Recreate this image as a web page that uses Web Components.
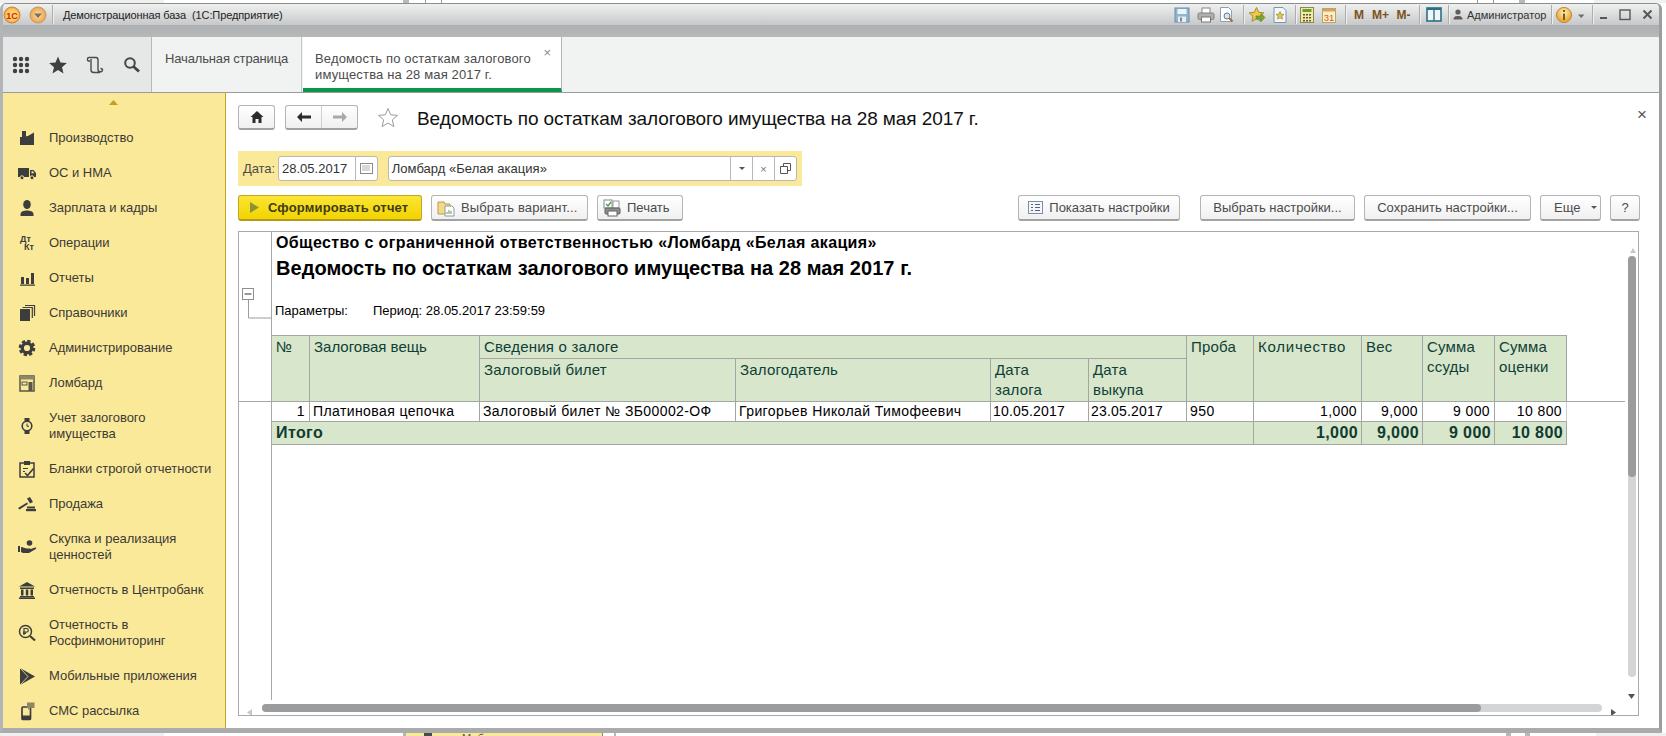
<!DOCTYPE html>
<html lang="ru"><head><meta charset="utf-8"><title>1С</title>
<style>
html,body{margin:0;padding:0;height:736px;width:1666px;overflow:hidden;background:#fff;font-family:"Liberation Sans",Arial,sans-serif}
body{display:flex;flex-direction:column}
</style></head>
<body>
<bg-strip style="height:3px"><i style="width:164px;background:#f0f0f0"></i><i style="width:239px"></i><i style="width:6px;background:#b9b9b9"></i><i style="width:16px"></i><i style="width:1px;background:#999"></i><i style="width:15px"></i><i style="width:1px;background:#999"></i><i style="width:1035px"></i><i style="width:1px;background:#999"></i><i style="width:15px"></i><i style="width:1px;background:#999"></i><i style="width:25px"></i><i style="width:6px;background:#b9b9b9"></i><i style="width:69px"></i><i style="flex:1;background:#f0f0f0"></i></bg-strip>
<app-window>
<title-bar></title-bar>
<tab-bar></tab-bar>
<div style="display:flex;height:635px">
<side-menu></side-menu>
<main-pane></main-pane>
</div>
</app-window>
<under-strip></under-strip>

<script>
const font='"Liberation Sans",Arial,sans-serif';
const svg=(w,h,body,extra='')=>`<svg xmlns="http://www.w3.org/2000/svg" width="${w}" height="${h}" viewBox="0 0 ${w} ${h}" ${extra}>${body}</svg>`;
function def(name,html,init){
  customElements.define(name,class extends HTMLElement{
    constructor(){super();this.attachShadow({mode:'open'});this.shadowRoot.innerHTML=typeof html==='function'?html(this):html;}
    connectedCallback(){if(init&&!this._i){this._i=1;init(this);}}
  });
}
def('bg-strip',`<style>:host{display:flex;flex:none;overflow:hidden}::slotted(i){display:block;flex:none}</style><slot></slot>`);
def('app-window',`<style>:host{display:block;flex:none;height:730px;width:1662px;box-sizing:border-box;background:#f1f3f2;border-left:3px solid #b3b4b5;border-right:3px solid #9c9d9e;border-top:1px solid #8d8d8d;border-radius:6px 6px 0 0;border-bottom:5px solid #a9abac;overflow:hidden}</style><slot></slot>`);

const ic={
 logo:svg(20,20,`<defs><radialGradient id="a"><stop offset="0" stop-color="#ffe27a"/><stop offset=".7" stop-color="#fdc95a"/><stop offset="1" stop-color="#e89a3c"/></radialGradient></defs><circle cx="10" cy="10" r="8" fill="url(#a)" stroke="#c9884a"/><text x="10" y="13.5" font-size="9" font-weight="700" text-anchor="middle" fill="#d3201c" font-family="Liberation Sans">1С</text>`),
 menu:svg(20,20,`<defs><radialGradient id="b"><stop offset="0" stop-color="#fde3a8"/><stop offset="1" stop-color="#eda24b"/></radialGradient></defs><circle cx="10" cy="10" r="8" fill="url(#b)" stroke="#c29a6a"/><path d="M6 8.5h8L10 13z" fill="#77706a"/>`),
 save:svg(16,16,`<rect x="1" y="1" width="14" height="14" fill="#8fb6cf" stroke="#6d8ea6"/><rect x="3.5" y="2" width="9" height="5" fill="#eef5f9"/><rect x="4" y="9.5" width="8" height="5.5" fill="#e6ecef"/><rect x="6" y="10.5" width="2" height="4" fill="#6d8ea6"/>`),
 print:svg(18,16,`<rect x="5" y="1" width="8" height="6" fill="#fff" stroke="#8a8a8a"/><rect x="1" y="6" width="16" height="6.5" rx="1.5" fill="#b0b0b0" stroke="#808080"/><rect x="4.5" y="10" width="9" height="5" fill="#fff" stroke="#777"/>`),
 prev:svg(18,16,`<path d="M2.5.5h8l3 3v11h-11z" fill="#fff" stroke="#8e9fb0"/><circle cx="9" cy="9" r="3" fill="#d7e6f2" stroke="#5b7b96"/><path d="M11 11l3.5 3.5" stroke="#b5622b" stroke-width="2"/>`),
 fav:svg(18,18,`<path d="M8.5 1.500l2.200 4.800 5.100.6-3.800 3.400 1 5-4.500-2.600L4 15.300l1-5L1.200 6.900l5.100-.6z" fill="#f1c84a" stroke="#a58d32"/><path d="M8 10h5V7.500l4 4-4 4V13H8z" fill="#76a832" stroke="#55802a" stroke-width=".6"/>`),
 docstar:svg(14,16,`<path d="M1 .5h9l3 3v12H1z" fill="#f3f7fa" stroke="#7a96ab"/><path d="M7 4.500l1.200 2.600 2.800.3-2.100 1.900.6 2.800L7 10.700l-2.500 1.400.6-2.800L3 7.400l2.800-.3z" fill="#edc24a" stroke="#8d7a3a" stroke-width=".6"/>`),
 calc:svg(14,16,`<rect x=".5" y=".5" width="13" height="15" fill="#f3e9a3" stroke="#8b8b4f"/><rect x="2.500" y="2" width="9" height="3" fill="#6d9a3c"/><path d="M3 7h2v1.500H3zM6 7h2v1.500H6zM9 7h2v1.500H9zM3 10h2v1.500H3zM6 10h2v1.500H6zM9 10h2v1.500H9zM3 13h2v1.500H3zM6 13h2v1.500H6zM9 13h2v1.500H9z" fill="#5a5a3a"/>`),
 cal:svg(14,16,`<rect x=".5" y="1.500" width="13" height="14" fill="#fbf0c4" stroke="#b5a67a"/><rect x="1" y="2" width="12" height="2.500" fill="#d9a05a"/><text x="7" y="14" font-size="9.5" text-anchor="middle" fill="#d9591e" font-family="Liberation Sans">31</text>`),
 panel:svg(16,15,`<rect x="1" y="1" width="14" height="13" fill="#eef6f8" stroke="#2d6f86" stroke-width="1.600"/><path d="M8 1v13" stroke="#2d6f86" stroke-width="1.400"/><path d="M1 2h14" stroke="#2d6f86" stroke-width="2"/>`),
 user:svg(10,11,`<circle cx="5" cy="3" r="2.600" fill="#5c5c5c"/><path d="M.5 10.500c0-3 2-3.600 4.500-3.600s4.500.6 4.500 3.600z" fill="#5c5c5c"/>`),
 info:svg(18,18,`<defs><radialGradient id="c" cx=".5" cy=".35"><stop offset="0" stop-color="#fff3c4"/><stop offset="1" stop-color="#efaa36"/></radialGradient></defs><circle cx="9" cy="9" r="7.600" fill="url(#c)" stroke="#b88a45"/><path d="M8 4h2v2H8zM8 7.500h2v6.500H8z" fill="#7d5a1e"/>`),
 ddown:svg(9,8,`<path d="M1 3.500h6.500L4.200 7z" fill="#6d6d6d"/>`),
 min:svg(10,10,`<rect x="1" y="7" width="7" height="2" fill="#55585b"/>`),
 max:svg(12,12,`<rect x="1" y="1" width="10" height="9.500" fill="none" stroke="#55585b" stroke-width="1.400"/>`),
 close:svg(11,11,`<path d="M1.500 1.500l8 8M9.500 1.500l-8 8" stroke="#55585b" stroke-width="2"/>`),
};
const sep=`<span class="sep"></span>`;
const gp=w=>`<span style="width:${w}px"></span>`;
const box=(w,c,cls='',st='')=>`<span class="${cls}" style="width:${w}px;${st}">${c}</span>`;
def('title-bar',`<style>
:host{display:flex;align-items:center;height:33px;box-sizing:border-box;padding:0 0 12px 0;background:linear-gradient(#eff0f0 0,#c7c8c9 21px,#adb0b2 21px,#b6b8ba 33px);font:11px ${font};color:#222}
span{display:flex;align-items:center;justify-content:center;flex:none}
.sep{width:1px;height:19px;background:#adadad;box-shadow:1px 0 #efefef}
.m{font-weight:700;color:#7d5119;font-size:12px}
.t{margin-left:10px;justify-content:flex-start;white-space:pre;font-size:11px;letter-spacing:-.1px}
.sp{flex:1}
</style>
<span style="width:20px;margin-left:-1px">${ic.logo}</span>${gp(6)}<span style="width:20px">${ic.menu}</span>${gp(4)}${sep}
<span class="t">Демонстрационная база  (1С:Предприятие)</span><span class="sp"></span>
${box(18,ic.save)}${gp(5)}${box(20,ic.print)}${gp(2)}${box(18,ic.prev)}${gp(7)}${sep}
${gp(4)}${box(18,ic.fav)}${gp(7)}${box(14,ic.docstar)}${gp(8)}${sep}
${gp(4)}${box(14,ic.calc)}${gp(8)}${box(14,ic.cal)}${gp(9)}${sep}
${gp(3)}${box(20,'M','m')}${gp(1)}${box(21,'M+','m')}${gp(1)}${box(23,'M-','m')}${gp(4)}${sep}
${gp(5)}${box(17,ic.panel)}${gp(6)}${sep}
${gp(4)}${box(10,ic.user)}${gp(4)}${box(78,'Администратор','','justify-content:flex-start;color:#333')}${gp(6)}${sep}
${gp(3)}${box(18,ic.info)}${gp(3)}${box(10,ic.ddown)}${gp(6)}${sep}
${gp(6)}${box(10,ic.min)}${gp(9)}${box(14,ic.max)}${gp(9)}${box(12,ic.close)}${gp(6)}`);

def('tab-bar',`<style>
:host{display:flex;height:56px;box-sizing:border-box;border-bottom:1px solid #9b9b9b;background:#f1f3f2;font:13px ${font};color:#4b4b4b}
.q{width:148px;background:#e6e7e7;border-right:1px solid #b9b9b9;display:flex;align-items:center;flex:none}
.q span{display:flex;justify-content:center;align-items:center;flex:none}
.t1{width:150px;padding:14px 0 0 13px;box-sizing:border-box;border-right:1px solid #c7c7c7;letter-spacing:-.15px;line-height:16px;flex:none}
.t2{width:259px;box-sizing:border-box;background:#fff;border-right:1px solid #b5b5b5;border-bottom:4px solid #0a9548;margin-left:1px;padding:14px 0 0 12px;line-height:16px;letter-spacing:.15px;display:flex;justify-content:space-between;flex:none;height:55px}
.x{color:#8a8a8a;font-size:13px;margin:-6px 10px 0 0;letter-spacing:0}
</style>
<div class="q">
<span style="width:18px;margin-left:9px">${svg(18,18,`<g fill="#3f3f3f"><circle cx="3" cy="3" r="2.200"/><circle cx="9" cy="3" r="2.200"/><circle cx="15" cy="3" r="2.200"/><circle cx="3" cy="9" r="2.200"/><circle cx="9" cy="9" r="2.200"/><circle cx="15" cy="9" r="2.200"/><circle cx="3" cy="15" r="2.200"/><circle cx="9" cy="15" r="2.200"/><circle cx="15" cy="15" r="2.200"/></g>`)}</span>
<span style="width:18px;margin-left:19px">${svg(18,18,`<path d="M9 .5l2.500 6 6.400.5-4.900 4.200 1.500 6.300L9 14.100l-5.500 3.400L5 11.200 .1 7l6.400-.5z" fill="#3f3f3f"/>`)}</span>
<span style="width:18px;margin-left:19px">${svg(18,18,`<path d="M4 5H2.500C1 5 1 1.500 3 1.500H10C11.500 1.500 12 2.500 12 4V13.500C12 16.500 16.500 16.500 16.500 14C16.500 13 15.500 12.500 14.500 12.500M14 16.500H8C6 16.500 5 15.500 5 14V3" fill="none" stroke="#4a4a4a" stroke-width="1.400"/>`)}</span>
<span style="width:18px;margin-left:19px">${svg(18,18,`<circle cx="7" cy="7" r="4.800" fill="none" stroke="#444" stroke-width="2"/><path d="M10.500 10.500l5.500 5" stroke="#444" stroke-width="2.800"/>`)}</span>
</div>
<div class="t1">Начальная страница</div>
<div class="t2"><span>Ведомость по остаткам залогового<br>имущества на 28 мая 2017 г.</span><span class="x">×</span></div>`);

const S=(b)=>svg(20,20,b);
const G='#3d3d3d';
const mi={
 factory:S(`<path d="M3 17V9h2V3h4v5l1 .5V5l7 3.500V17z" fill="${G}"/><path d="M10 5l7-2v5.500L10 8z" fill="#fbe99a"/><path d="M10 8.500l7-4V17H10z" fill="${G}"/>`),
 truck:S(`<rect x="1" y="5" width="11" height="9" fill="${G}"/><path d="M13 7h3.500l2.500 3v4h-6z" fill="${G}"/><path d="M14.500 8.200h1.500l1.300 2h-2.800z" fill="#fbe99a"/><circle cx="5" cy="14.800" r="2" fill="${G}" stroke="#fbe99a"/><circle cx="15" cy="14.800" r="2" fill="${G}" stroke="#fbe99a"/>`),
 user:S(`<ellipse cx="10" cy="6.500" rx="3.800" ry="4.500" fill="${G}"/><path d="M3.500 18v-2c0-2.500 3.500-3.500 6.500-3.500s6.500 1 6.500 3.500v2z" fill="${G}"/>`),
 dk:S(`<text x="3" y="9" font-size="9" font-weight="700" fill="${G}" font-family="Liberation Sans">Дт</text><text x="7" y="17" font-size="9" font-weight="700" fill="${G}" font-family="Liberation Sans">Кт</text>`),
 bars:S(`<path d="M4 9h3v7H4zM9 10h3v6H9zM14 5h3v11h-3zM3 16.500h15v1.300H3z" fill="${G}"/>`),
 books:S(`<rect x="3" y="6" width="10" height="12" fill="${G}"/><path d="M5.500 4.500h9.800V15M8 2.500h9.500V13" fill="none" stroke="${G}" stroke-width="1.200"/>`),
 gear:S(`<circle cx="10" cy="10" r="4.800" fill="none" stroke="${G}" stroke-width="3.400"/><circle cx="10" cy="10" r="7" fill="none" stroke="${G}" stroke-width="2.600" stroke-dasharray="3.300 2.200"/>`),
 shop:S(`<rect x="3" y="3" width="14" height="15" fill="none" stroke="#5a5646" stroke-width="1.500"/><path d="M3 3h14v3.500H3z" fill="#8d8669"/><rect x="5" y="9" width="5" height="3" fill="none" stroke="#5a5646"/><rect x="11.500" y="9" width="4" height="9" fill="#5a5646"/>`),
 watch:S(`<rect x="7.500" y="2" width="5" height="16" fill="${G}"/><circle cx="10" cy="10" r="4.800" fill="#fbe99a" stroke="${G}" stroke-width="1.600"/><path d="M10 7.500v2.800h2" fill="none" stroke="${G}"/>`),
 clip:S(`<rect x="3" y="4" width="14" height="14" fill="none" stroke="${G}" stroke-width="1.500"/><rect x="7" y="2" width="6" height="4" fill="${G}"/><path d="M6 9.500h5M6 12.500h2" stroke="${G}" stroke-width="1.200"/><path d="M8 14l2.500 2.500 6-7" fill="none" stroke="${G}" stroke-width="1.600"/>`),
 gavel:S(`<path d="M1 14l9-5.500 1 1.500-8.500 5.500z" fill="${G}"/><path d="M10 4.500l3-1.500 3 5-3 1.500z" fill="${G}"/><rect x="10" y="12.500" width="8" height="2" fill="${G}"/><rect x="9" y="15" width="10" height="2.200" fill="${G}"/>`),
 hand:S(`<circle cx="12.500" cy="6" r="2.800" fill="${G}"/><path d="M1 9h2v6H1zM4 10c2 0 4 1.500 6 1.500h3c1 0 1 1.500 0 1.500h-2l7-2.500c1.500-.3 1.500 1 .8 1.500L12 16H6l-2-1z" fill="${G}"/>`),
 bank:S(`<path d="M10 2l8 4.500H2z" fill="${G}"/><path d="M3 7.500h14v1.500H3zM4 9.500h2.500v6H4zM8.800 9.500h2.500v6H8.800zM13.500 9.500H16v6h-2.500zM3 16h14v1.200H3zM2 17.500h16V19H2z" fill="${G}"/>`),
 mag:S(`<circle cx="8.500" cy="8.500" r="6" fill="none" stroke="${G}" stroke-width="1.500"/><path d="M7 12V5.500h2.500a1.800 1.800 0 010 3.600H6M6 10.500h3" fill="none" stroke="${G}" stroke-width="1.200"/><path d="M13 13l5 4.500" stroke="${G}" stroke-width="2.200"/>`),
 play:S(`<path d="M3 2l15 8.500L3 19z" fill="${G}"/><path d="M3 2l8 8.500L3 19" fill="none" stroke="#fbe99a" stroke-width=".8"/>`),
 sms:S(`<rect x="5" y="6" width="8.500" height="12.500" rx="1" fill="none" stroke="${G}" stroke-width="1.700"/><rect x="5" y="14.500" width="8.500" height="4" fill="${G}"/><path d="M10 1.500h7.500V7H13l-2 2V7h-1z" fill="#8d8669"/>`),
};
def('nav-item',(h)=>`<style>
:host{display:flex;align-items:center;box-sizing:border-box;padding:10px 0 9px 14px;font:13px/16px ${font};color:#3c3a36;letter-spacing:-.03px}
.i{width:20px;height:16px;display:flex;align-items:center;justify-content:center;flex:none;margin-right:12px}
svg{flex:none}
</style><span class="i">${mi[h.getAttribute('icon')]}</span><span><slot></slot></span>`);
def('side-menu',`<style>
:host{display:block;width:223px;flex:none;box-sizing:border-box;background:#fbe99a;border-right:1px solid #c2a624;overflow:hidden}
.u{display:flex;justify-content:center;height:27px;padding:7px 1px 0 0;box-sizing:border-box}
</style><div class="u">${svg(9,5,'<path d="M4.500 0L9 5H0z" fill="#bfa21f"/>')}</div><slot></slot>`);
document.querySelector('side-menu').innerHTML=[
['factory','Производство'],['truck','ОС и НМА'],['user','Зарплата и кадры'],['dk','Операции'],['bars','Отчеты'],['books','Справочники'],['gear','Администрирование'],['shop','Ломбард'],['watch','Учет залогового<br>имущества'],['clip','Бланки строгой отчетности'],['gavel','Продажа'],['hand','Скупка и реализация<br>ценностей'],['bank','Отчетность в Центробанк'],['mag','Отчетность в<br>Росфинмониторинг'],['play','Мобильные приложения'],['sms','СМС рассылка']
].map(([i,t])=>`<nav-item icon="${i}">${t}</nav-item>`).join('');

def('ui-button',(h)=>`<style>
:host{display:inline-flex;align-items:center;justify-content:center;box-sizing:border-box;height:26px;flex:none;border:1px solid #b4b4b4;border-bottom:2px solid #a2a2a2;border-radius:3px;background:linear-gradient(#fff,#f0f0f0);font:13px ${font};color:#4b4b4b;letter-spacing:0;white-space:nowrap;gap:6px}
:host([primary]){background:linear-gradient(#fbe535,#f2d400);border-color:#c2a624;border-bottom-color:#b39a1f;color:#3f3c18;font-weight:700;letter-spacing:.15px;justify-content:flex-start;padding-left:11px;gap:9px}
:host([start]){justify-content:flex-start;padding-left:5px}
</style><slot name="i"></slot><slot></slot>`);

def('main-pane',`<style>
:host{display:flex;flex-direction:column;flex:1;min-width:0;background:#fff;box-sizing:border-box;padding:12px 20px 0 12px;font:13px ${font};color:#333}
.row{display:flex;align-items:center;flex:none}
.head{height:25px}
.title{font-size:19px;color:#111;margin-left:18px;letter-spacing:-.08px;white-space:nowrap;padding-top:2px}
.close{margin-left:auto;margin-right:-8px;color:#555;font-size:17px;line-height:17px;margin-top:-6px}
.home{width:37px;height:25px;margin-right:10px}
.nav{display:flex;width:73px;height:25px;box-sizing:border-box;border:1px solid #b4b4b4;border-bottom:2px solid #a2a2a2;border-radius:3px;background:linear-gradient(#fff,#f0f0f0);margin-right:19px}
.nav span{flex:1;display:flex;align-items:center;justify-content:center}
.nav span+span{border-left:1px solid #d0d0d0}
.filter{width:564px;height:35px;background:#fbe99a;margin-top:21px;padding:0 5px;box-sizing:border-box}
.lab{color:#4b4b4b;width:35px;font-size:13px;letter-spacing:-.1px}
.in{display:flex;height:25px;box-sizing:border-box;border:1px solid #b8b8b8;border-radius:3px;background:#fff;align-items:center;color:#333;font-size:13px;letter-spacing:.03px}
.in b{font-weight:400;flex:1;padding-left:3px;white-space:nowrap}
.cell{display:flex;justify-content:center;align-items:center;height:100%;width:21px;border-left:1px solid #b8b8b8;flex:none}
.btns{margin-top:9px;height:26px;margin-right:-1px}
</style>
<div class="row head">
<ui-button class="home">${svg(14,14,'<path d="M7 1L.5 7H2.500v6H5.500V9h3v4h3V7h2z" fill="#2b2b2b"/>')}</ui-button>
<div class="nav"><span>${svg(16,12,'<path d="M6 1L1 6l5 5V7.500h9v-3H6z" fill="#2b2b2b"/>')}</span><span>${svg(16,12,'<path d="M10 1l5 5-5 5V7.500H1v-3h9z" fill="#a9a9a9"/>')}</span></div>
${svg(22,21,'<path d="M11 1.500l2.700 6.300 6.800.6-5.200 4.500 1.600 6.700L11 16.100l-5.900 3.500 1.600-6.700L1.500 8.400l6.800-.6z" fill="#fff" stroke="#9b9b9b"/>')}
<div class="title">Ведомость по остаткам залогового имущества на 28 мая 2017 г.</div>
<div class="close">×</div>
</div>
<div class="row filter">
<span class="lab">Дата:</span>
<div class="in" style="width:100px"><b>28.05.2017</b><span class="cell">${svg(13,11,'<rect x=".5" y=".5" width="12" height="10" fill="#fff" stroke="#8a8a8a"/><path d="M2.500 3h8M2.500 5h8M2.500 7h8" stroke="#666" stroke-dasharray="1 1"/>')}</span></div>
<div class="in" style="width:410px;margin-left:10px"><b>Ломбард «Белая акация»</b>
<span class="cell">${svg(6,3,'<path d="M0 0h6L3 3z" fill="#555"/>')}</span>
<span class="cell" style="color:#777;font-size:11px;letter-spacing:0">×</span>
<span class="cell">${svg(11,11,'<path d="M3.500 3V.500h7v7H8M.500 3.500h7v7h-7z" fill="none" stroke="#555"/>')}</span></div>
</div>
<div class="row btns">
<ui-button primary style="width:184px"><span slot="i" style="display:flex">${svg(9,11,'<path d="M0 0l9 5.500L0 11z" fill="#8b9430"/>')}</span>Сформировать отчет</ui-button>
<ui-button start style="width:157px;margin-left:9px"><span slot="i" style="display:flex">${svg(18,18,'<path d="M1 3h6l1 2h5v10H1z" fill="#f5d98a" stroke="#b99b4a"/><path d="M8 7h7l2 2v8H8z" fill="#fff" stroke="#8d9aa8"/><path d="M10 15v-2M12 15v-4M14 15v-3" stroke="#6d8f4a"/>')}</span><span style="letter-spacing:.12px">Выбрать вариант...</span></ui-button>
<ui-button start style="width:86px;margin-left:9px"><span slot="i" style="display:flex">${svg(18,18,'<rect x="1" y="1" width="8" height="8" fill="#fff" stroke="#7a8a9a"/><path d="M3 5l2 2 3-4" fill="none" stroke="#4d9a3a" stroke-width="1.300"/><rect x="10" y="2" width="6" height="7" fill="#fff" stroke="#999"/><rect x="2" y="9" width="15" height="6" rx="1" fill="#8f8f8f" stroke="#5f5f5f"/><rect x="5" y="12" width="9" height="5" fill="#fff" stroke="#666"/>')}</span>Печать</ui-button>
<ui-button style="width:162px;margin-left:auto"><span slot="i" style="display:flex">${svg(15,13,'<rect x=".5" y=".5" width="14" height="12" fill="#f3f6fa" stroke="#7f8fa8"/><path d="M3 3.500h2M3 6.500h2M3 9.500h2M7 3.500h5M7 6.500h5M7 9.500h5" stroke="#56657d"/>')}</span>Показать настройки</ui-button>
<ui-button style="width:155px;margin-left:20px">Выбрать настройки...</ui-button>
<ui-button style="width:167px;margin-left:9px">Сохранить настройки...</ui-button>
<ui-button start style="width:61px;margin-left:9px;padding-left:13px">Еще ${svg(6,3,'<path d="M0 0h6L3 3z" fill="#555"/>','style="margin-left:5px"')}</ui-button>
<ui-button style="width:30px;margin-left:9px">?</ui-button>
</div>
<report-view></report-view>`);

const grid='#a3a7a3';
def('report-view',`<style>
:host{display:block;position:relative;flex:none;margin-top:10px;height:485px;width:1401px;box-sizing:border-box;border:1px solid #a9a9a9;background:#fff;overflow:hidden;font:13px ${font};color:#000}
.w{display:flex;height:468px}
.g{width:33px;box-sizing:border-box;border-right:1px solid #a7a7a7;padding-top:56px;flex:none}
.g svg{display:block}
.d{flex:1;min-width:0;position:relative}
.line{position:absolute;left:0;top:169px;width:1386px;height:1px;background:${grid}}
.org{font:700 16px/20px ${font};padding:1px 0 0 4px;letter-spacing:.38px;white-space:nowrap}
.ttl{font:700 20px/26px ${font};margin-top:2px;padding-left:4px;letter-spacing:.05px;white-space:nowrap}
.par{display:flex;font:13px/16px ${font};margin-top:22px;padding-left:3px;height:16px}
.par span:first-child{width:98px}
table{position:relative;border-collapse:separate;border-spacing:0;table-layout:fixed;width:1295px;margin-top:16px;border-top:1px solid ${grid}}
td{border-right:1px solid ${grid};border-bottom:1px solid ${grid};box-sizing:border-box;vertical-align:top;overflow:hidden;white-space:nowrap;padding:0}
.h{background:#d8e6cc;color:#0f4036;font-size:15px;line-height:20px;padding:1px 2px 0 4px;letter-spacing:.2px}
.n{background:#fff;color:#000;font-size:14px;line-height:19px;height:20px;padding:0 4px 0 3px;letter-spacing:.4px}
.r{text-align:right}
.tot{background:#d8e6cc;color:#0f3b31;font-weight:700;font-size:16px;line-height:22px;height:23px;padding:0 3px 0 4px;letter-spacing:.4px}
.n.ln{border-right-color:#c5d2d2}
.sb{position:absolute;background:#d4d5d6;border-radius:4px}
.th{position:absolute;background:#9b9c9d;border-radius:4px}
.ar{position:absolute;display:block}
</style>
<div class="line"></div>
<div class="w">
<div class="g">${svg(32,31,`<rect x="3.500" y=".5" width="11" height="11" fill="#fff" stroke="#8f8f8f"/><path d="M5.500 6h7" stroke="#333"/><path d="M9.500 12v18H32" fill="none" stroke="#9c9c9c"/>`)}</div>
<div class="d">
<div class="org">Общество с ограниченной ответственностью «Ломбард «Белая акация»</div>
<div class="ttl">Ведомость по остаткам залогового имущества на 28 мая 2017 г.</div>
<div class="par"><span>Параметры:</span><span>Период: 28.05.2017 23:59:59</span></div>
<table>
<colgroup><col style="width:38px"><col style="width:170px"><col style="width:256px"><col style="width:255px"><col style="width:98px"><col style="width:98px"><col style="width:67px"><col style="width:108px"><col style="width:61px"><col style="width:72px"><col style="width:72px"></colgroup>
<tr style="height:23px"><td class="h" rowspan="2">№</td><td class="h" rowspan="2" style="letter-spacing:0">Залоговая вещь</td><td class="h" colspan="4">Сведения о залоге</td><td class="h" rowspan="2">Проба</td><td class="h" rowspan="2" style="letter-spacing:.75px">Количество</td><td class="h" rowspan="2">Вес</td><td class="h" rowspan="2">Сумма<br>ссуды</td><td class="h" rowspan="2">Сумма<br>оценки</td></tr>
<tr style="height:43px"><td class="h">Залоговый билет</td><td class="h">Залогодатель</td><td class="h">Дата<br>залога</td><td class="h">Дата<br>выкупа</td></tr>
<tr><td class="n r">1</td><td class="n">Платиновая цепочка</td><td class="n">Залоговый билет № ЗБ00002-ОФ</td><td class="n">Григорьев Николай Тимофеевич</td><td class="n" style="padding-left:2px;letter-spacing:.2px">10.05.2017</td><td class="n" style="padding-left:2px;letter-spacing:.2px">23.05.2017</td><td class="n">950</td><td class="n r">1,000</td><td class="n r">9,000</td><td class="n r">9 000</td><td class="n r ln">10 800</td></tr>
<tr><td class="tot" colspan="7">Итого</td><td class="tot r">1,000</td><td class="tot r">9,000</td><td class="tot r">9 000</td><td class="tot r">10 800</td></tr>
</table>
</div></div>
<span class="ar" style="left:1391px;top:9px">${svg(6,5,'<path d="M3 0l3 5H0z" fill="#c6c7c8"/>')}</span>
<span class="sb" style="left:1389px;top:24px;width:8px;height:421px"></span>
<span class="th" style="left:1389px;top:24px;width:8px;height:221px"></span>
<span class="ar" style="left:1389px;top:455px">${svg(7,5,'<path d="M0 0h7L3.500 5z" fill="#555"/>')}</span>
<span class="ar" style="left:8px;top:472px">${svg(5,7,'<path d="M5 0v7L0 3.500z" fill="#c6c7c8"/>')}</span>
<span class="sb" style="left:23px;top:472px;width:1340px;height:8px"></span>
<span class="th" style="left:23px;top:472px;width:1219px;height:8px"></span>
<span class="ar" style="left:1372px;top:472px">${svg(5,7,'<path d="M0 0v7l5-3.500z" fill="#555"/>')}</span>`);

def('under-strip',`<style>
:host{display:flex;height:3px;flex:none;overflow:hidden;background:#fff}
i{display:block;flex:none}
.y{display:flex;width:200px;height:3px;background:#fbe99a;border-left:3px solid #b4b4b4;border-right:1px solid #8d8a6a;overflow:hidden;font:11px/12px ${font};color:#555;padding-left:18px;box-sizing:border-box;white-space:nowrap;flex:none}
.y u{display:block;width:8px;height:3px;background:#4a4a4a;margin-right:30px;flex:none}
</style>
<i style="width:164px;background:#efefef"></i><i style="width:239px"></i><div class="y"><u></u><span style="display:block;margin-top:-1px">Мобильные приложения</span></div><i style="width:11px"></i><i style="width:2px;background:#b9b9b9"></i><i style="width:890px"></i><i style="width:5px;background:#b9b9b9"></i><i style="width:14px"></i><i style="width:5px;background:#b9b9b9"></i><i style="width:66px"></i><i style="flex:1;background:#f0f0f0"></i>`);
</script>
</body></html>
